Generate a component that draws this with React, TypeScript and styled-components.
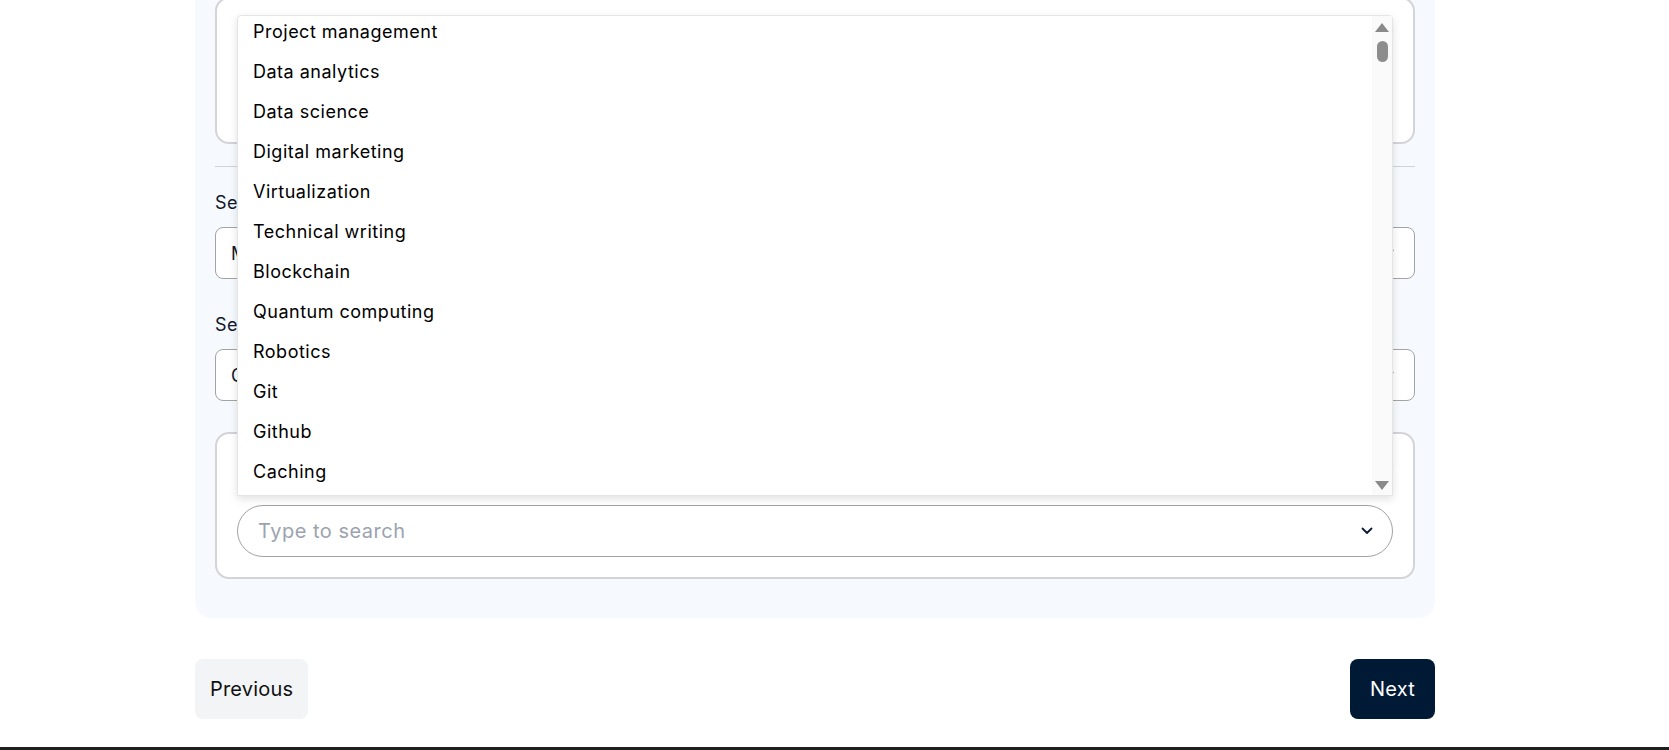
import React from "react";
import styled, { createGlobalStyle } from "styled-components";

/* ---- Data ---- */
const SUGGESTIONS = [
    "Project management",
    "Data analytics",
    "Data science",
    "Digital marketing",
    "Virtualization",
    "Technical writing",
    "Blockchain",
    "Quantum computing",
    "Robotics",
    "Git",
    "Github",
    "Caching",
];

const FONT = `Inter, "Noto Sans", "Liberation Sans", sans-serif`;

/* ---- Icons ---- */
function Chevron ()
{
    return (
        <svg width="12" height="8" viewBox="0 0 12 8" fill="none">
            <path d="M1.5 1.5 L6 6 L10.5 1.5" stroke="#0b1b33" strokeWidth="1.8" strokeLinecap="round" strokeLinejoin="round"/>
        </svg>
    );
}

/* ---- Parts ---- */
function SkillCard (prop: { label: string; open?: boolean })
{
    return (
        <Card>
            <CardHead>
                <CardLabel>{prop.label}</CardLabel>
                <ClearLink>Clear</ClearLink>
            </CardHead>
            <SearchWrap>
                <SearchInput placeholder="Type to search"/>
                <SearchIcon><Chevron/></SearchIcon>
                {prop.open && (
                    <Listbox role="listbox">
                        <Options>
                            <OptionsInner>
                                {SUGGESTIONS.map(s => <Option key={s}>{s}</Option>)}
                            </OptionsInner>
                        </Options>
                        <ScrollTrack>
                            <ArrowUp/>
                            <Thumb/>
                            <TrackFill/>
                            <ArrowDown/>
                        </ScrollTrack>
                    </Listbox>
                )}
            </SearchWrap>
        </Card>
    );
}

function SelectField (prop: { label: string; value: string })
{
    return (
        <Field>
            <FieldLabel>{prop.label}</FieldLabel>
            <SelectBox>
                <SelectValue>{prop.value}</SelectValue>
                <Chevron/>
            </SelectBox>
        </Field>
    );
}

export default function App ()
{
    return (
        <>
            <Global/>
            <Page>
                <Main>
                    <Panel>
                        <SkillCard label="Core skills"/>
                        <Divider/>
                        <Fields>
                            <SelectField label="Select level" value="Mid-level"/>
                            <SelectField label="Select field" value="Computing"/>
                        </Fields>
                        <SkillCard label="Skills" open/>
                    </Panel>
                    <Nav>
                        <PrevBtn>Previous</PrevBtn>
                        <NextBtn>Next</NextBtn>
                    </Nav>
                </Main>
                <BottomBar/>
            </Page>
        </>
    );
}

/* ---- Styled ---- */
const Global = createGlobalStyle`
    html, body { margin: 0; padding: 0; background: #fff; }
    body { font-family: ${FONT}; color: #111827; }
    * { box-sizing: border-box; }
`;

const Page = styled.div`
    width: 1669px;
    height: 750px;
    overflow: hidden;
    display: flex;
    flex-direction: column;
`;

const Main = styled.main`
    width: 1240px;
    margin: -23px 0 0 195px; /* page is scrolled */
    flex: 1;
`;

const Panel = styled.section`
    display: flex;
    flex-direction: column;
    padding: 20px 20px 39px;
    background: #f6f9fe;
    border-radius: 16px;
`;

const Card = styled.div`
    display: flex;
    flex-direction: column;
    gap: 23px;
    padding: 20px;
    background: #fff;
    border: 2px solid #d4d4d8;
    border-radius: 14px;
`;

const CardHead = styled.div`
    display: flex;
    align-items: center;
    justify-content: space-between;
    height: 28px;
`;

const CardLabel = styled.span`
    font-size: 18px;
    letter-spacing: 0.4px;
    color: #0f172a;
`;

const ClearLink = styled.span`
    font-size: 14px;
    color: #2563eb;
`;

const SearchWrap = styled.div`
    position: relative;
    display: flex;
    align-items: center;
    height: 52px;
`;

const SearchInput = styled.input`
    width: 100%;
    height: 100%;
    padding: 0 44px 0 20px;
    border: 1.5px solid #a1a1aa;
    border-radius: 999px;
    font-family: ${FONT};
    font-size: 20px;
    letter-spacing: 0.5px;
    color: #111827;
    background: #fff;
    outline: none;

    &::placeholder { color: #9ca3af; }
`;

const SearchIcon = styled.span`
    position: absolute;
    right: 20px;
    display: flex;
    pointer-events: none;
`;

const Listbox = styled.div`
    position: absolute;
    left: 0;
    right: 0;
    bottom: calc(100% + 9px);
    height: 481px;
    display: flex;
    background: #fff;
    border: 1px solid #e5e5e5;
    border-radius: 4px 4px 0 0;
    box-shadow: 0 3px 8px rgba(0, 0, 0, 0.12);
    z-index: 5;
`;

const Options = styled.div`
    flex: 1;
    overflow: hidden;
`;

const OptionsInner = styled.ul`
    list-style: none;
    margin: -5px 0 0;
    padding: 0;
`;

const Option = styled.li`
    height: 40px;
    display: flex;
    align-items: center;
    padding-left: 15px;
    font-size: 18px;
    letter-spacing: 0.5px;
    color: #000;
`;

const ScrollTrack = styled.div`
    width: 20px;
    display: flex;
    flex-direction: column;
    align-items: center;
    padding: 7px 0 5px;
    background: #fafafa;
`;

const ArrowUp = styled.span`
    width: 0;
    height: 0;
    border-left: 7px solid transparent;
    border-right: 7px solid transparent;
    border-bottom: 9px solid #8a8a8a;
`;

const ArrowDown = styled.span`
    width: 0;
    height: 0;
    border-left: 7px solid transparent;
    border-right: 7px solid transparent;
    border-top: 9px solid #8a8a8a;
`;

const Thumb = styled.span`
    width: 11px;
    height: 21px;
    margin-top: 9px;
    border-radius: 6px;
    background: #8d8d8d;
`;

const TrackFill = styled.span`
    flex: 1;
`;

const Divider = styled.hr`
    margin: 22px 0 0;
    border: none;
    border-top: 1px solid #d4d4d8;
`;

const Fields = styled.div`
    display: flex;
    flex-direction: column;
    gap: 34px;
    margin: 24px 0 31px;
`;

const Field = styled.label`
    display: flex;
    flex-direction: column;
    gap: 12px;
`;

const FieldLabel = styled.span`
    height: 24px;
    line-height: 24px;
    font-size: 18px;
    letter-spacing: 0.4px;
    color: #0f172a;
`;

const SelectBox = styled.div`
    height: 52px;
    display: flex;
    align-items: center;
    justify-content: space-between;
    padding: 0 20px 0 15px;
    border: 1px solid #a3a3a3;
    border-radius: 8px;
    background: #fff;
`;

const SelectValue = styled.span`
    font-size: 18px;
    color: #0f172a;
`;

const Nav = styled.nav`
    display: flex;
    justify-content: space-between;
    margin-top: 41px;
`;

const PrevBtn = styled.button`
    height: 60px;
    padding: 0 15px;
    border: none;
    border-radius: 8px;
    background: #f3f4f6;
    font-family: ${FONT};
    font-size: 20px;
    letter-spacing: 0.2px;
    color: #111;
    cursor: pointer;
`;

const NextBtn = styled(PrevBtn)`
    padding: 0 20px;
    background: #001a35;
    color: #fff;
`;

const BottomBar = styled.footer`
    height: 3px;
    background: #1f1f1f;
`;
